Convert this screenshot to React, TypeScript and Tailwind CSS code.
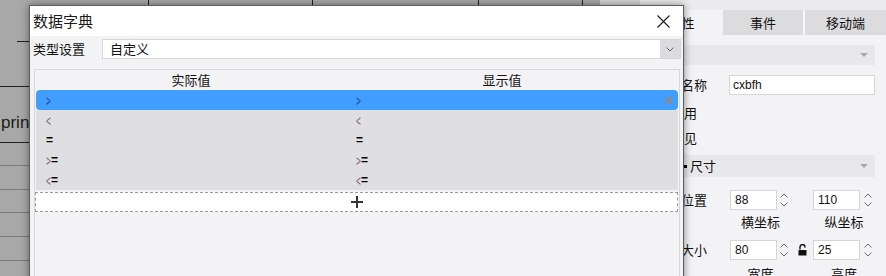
import React from 'react';

const rows: [string, string][] = [
  ['>', '>'],
  ['<', '<'],
  ['=', '='],
  ['>=', '>='],
  ['<=', '<='],
];

const Sym: React.FC<{ v: string; active?: boolean }> = ({ v, active }) => (
  <span className="inline-flex items-center font-['Liberation_Sans',sans-serif] leading-none">
    {v.split('').map((c, i) =>
      c === '=' ? (
        <span key={i} className="text-[12px] text-black font-bold">=</span>
      ) : (
        <span
          key={i}
          className={`inline-block w-[5px] text-[15px] scale-x-[0.55] origin-left ${active ? 'text-[#23408e]' : 'text-[#7b5a78]'}`}
        >
          {c}
        </span>
      )
    )}
  </span>
);

const Spinner = () => (
  <div className="flex flex-col items-center justify-between h-full py-[3px]">
    <svg width="8" height="5" viewBox="0 0 8 5">
      <path d="M0.5 4.5 L4 1 L7.5 4.5" fill="none" stroke="#6b6b6b" strokeWidth="1" />
    </svg>
    <svg width="8" height="5" viewBox="0 0 8 5">
      <path d="M0.5 0.5 L4 4 L7.5 0.5" fill="none" stroke="#6b6b6b" strokeWidth="1" />
    </svg>
  </div>
);

const NumBox: React.FC<{ value: string }> = ({ value }) => (
  <div className="w-[47px] h-full bg-white border border-[#d6d6d6] flex items-center pl-[4px] font-['Liberation_Sans',sans-serif] text-[12px] text-[#111]">
    {value}
  </div>
);

const Triangle = () => (
  <svg width="8" height="4" viewBox="0 0 8 4">
    <path d="M0 0 L8 0 L4 4 Z" fill="#a8a8a8" />
  </svg>
);

const PropertyPanel = () => (
  <div className="w-[246px] h-full bg-[#f3f3f5] flex flex-col overflow-hidden text-[13px] text-[#111]">
    <div className="h-[10px] shrink-0 bg-[#ebebed]" />
    <div className="flex h-[25px] shrink-0">
      <div className="w-[83px] flex items-center justify-center bg-[#f3f3f5]">属性</div>
      <div className="w-[80px] flex items-center justify-center bg-[#dcdcdf]">事件</div>
      <div className="w-[2px] bg-[#f7f7f7]" />
      <div className="w-[81px] flex items-center justify-center bg-[#dcdcdf]">移动端</div>
    </div>

    <div className="mt-[10px] mx-[11px] h-[20px] shrink-0 bg-[#e8e8ea] flex items-center justify-end pr-[7px]">
      <Triangle />
    </div>

    <div className="mt-[10px] h-[20px] shrink-0 flex items-center">
      <div className="ml-[11px] w-[58px] text-right pr-[2px]">控件名称</div>
      <div className="ml-[20px] w-[146px] h-full bg-white border border-[#d6d6d6] flex items-center pl-[3px] font-['Liberation_Sans',sans-serif] text-[12px]">
        cxbfh
      </div>
    </div>

    <div className="mt-[5px] h-[25px] shrink-0 flex items-center pl-[31px]">启用</div>
    <div className="h-[25px] shrink-0 flex items-center pl-[31px]">可见</div>

    <div className="mt-[5px] mx-[11px] h-[22px] shrink-0 bg-[#e8e8ea] flex items-center pr-[7px]">
      <span className="ml-[33px] w-[3px] h-[3px] bg-black" />
      <span className="ml-[3px]">尺寸</span>
      <span className="flex-1" />
      <Triangle />
    </div>

    <div className="mt-[13px] h-[20px] shrink-0 flex items-center">
      <div className="ml-[11px] w-[58px] text-right pr-[2px]">位置</div>
      <div className="ml-[21px] flex h-full">
        <NumBox value="88" />
        <div className="w-[14px] h-full"><Spinner /></div>
        <div className="w-[22px]" />
        <NumBox value="110" />
        <div className="w-[15px] h-full"><Spinner /></div>
      </div>
    </div>
    <div className="mt-[3px] h-[18px] shrink-0 flex items-center">
      <div className="ml-[90px] w-[61px] text-center">横坐标</div>
      <div className="ml-[22px] w-[62px] text-center">纵坐标</div>
    </div>

    <div className="mt-[9px] h-[20px] shrink-0 flex items-center">
      <div className="ml-[11px] w-[58px] text-right pr-[2px]">大小</div>
      <div className="ml-[21px] flex h-full">
        <NumBox value="80" />
        <div className="w-[14px] h-full"><Spinner /></div>
        <div className="w-[22px] flex items-center justify-center">
          <svg width="9" height="12" viewBox="0 0 9 12">
            <path d="M2 5.5 V3 A2.5 2.5 0 0 1 7 3 V3.5" fill="none" stroke="#111" strokeWidth="1.4" />
            <rect x="0.5" y="6" width="8" height="5.5" fill="#111" />
          </svg>
        </div>
        <NumBox value="25" />
        <div className="w-[15px] h-full"><Spinner /></div>
      </div>
    </div>
    <div className="mt-[5px] h-[18px] shrink-0 flex items-center">
      <div className="ml-[90px] w-[61px] text-center">宽度</div>
      <div className="ml-[22px] w-[62px] text-center">高度</div>
    </div>
  </div>
);

const Canvas = () => (
  <div className="w-[600px] h-full bg-[#a8a8a8] flex flex-col overflow-hidden">
    <div className="flex h-[5px] shrink-0">
      <div className="w-[149px] border-r border-[#1f1f1f]" />
      <div className="w-[164px] border-r border-[#1f1f1f]" />
      <div className="w-[166px] border-r border-[#1f1f1f]" />
      <div className="w-[104px] border-r border-[#1f1f1f]" />
    </div>
    <div className="h-[36px] shrink-0" />
    <div className="ml-[17px] h-[45px] shrink-0 border-t border-[#1f1f1f]" />
    <div className="h-[56px] shrink-0 border-t border-[#1f1f1f] pt-[25px] pl-[1px] font-['Liberation_Sans',sans-serif] text-[17px] leading-[22px] text-[#1a1a1a]">
      print
    </div>
    <div className="h-[23px] shrink-0 border-t border-[#1f1f1f]" />
    <div className="h-[24px] shrink-0 border-t border-[#7c7c7c]" />
    <div className="h-[23px] shrink-0 border-t border-[#7c7c7c]" />
    <div className="h-[24px] shrink-0 border-t border-[#7c7c7c]" />
    <div className="h-[24px] shrink-0 border-t border-[#7c7c7c]" />
    <div className="h-[24px] shrink-0 border-t border-[#7c7c7c]" />
  </div>
);

const DictDialog = () => (
  <div className="absolute left-[29px] top-[5px] w-[655px] h-[300px] border border-[#5e5e5e] bg-[#f3f3f5] shadow-[0_0_8px_rgba(0,0,0,0.45)] flex flex-col text-[13px] text-[#111]">
    <div className="h-[30px] shrink-0 bg-white flex items-center justify-between pl-[3px] pr-[13px]">
      <span className="text-[15px] text-[#1a1a1a]">数据字典</span>
      <svg width="13" height="13" viewBox="0 0 13 13">
        <path d="M0.5 0.5 L12.5 12.5 M12.5 0.5 L0.5 12.5" stroke="#1a1a1a" strokeWidth="1.1" />
      </svg>
    </div>

    <div className="mt-[3px] h-[20px] shrink-0 flex items-center pl-[3px] pr-[2px]">
      <span className="w-[69px]">类型设置</span>
      <div className="flex-1 h-full bg-white border border-[#d6d6d6] flex items-center">
        <span className="flex-1 pl-[7px]">自定义</span>
        <div className="w-[20px] h-full bg-[#dcdcde] flex items-center justify-center">
          <svg width="8" height="5" viewBox="0 0 8 5">
            <path d="M0.5 0.5 L4 4 L7.5 0.5" fill="none" stroke="#666" strokeWidth="1" />
          </svg>
        </div>
      </div>
    </div>

    <div className="mt-[10px] ml-[4px] mr-[3px] flex-1 border border-[#d8d8d8] flex flex-col">
      <div className="h-[20px] shrink-0 flex items-center px-[1px]">
        <div className="w-[310px] text-center">实际值</div>
        <div className="w-[312px] text-center">显示值</div>
      </div>
      <div className="px-[1px] shrink-0">
        {rows.map(([a, b], i) => (
          <div
            key={i}
            className={`h-[20px] flex items-center ${i === 0 ? 'bg-[#409eff] rounded-[4px]' : 'bg-[#dfdfe1]'}`}
          >
            <div className="w-[310px] pl-[10px] flex items-center">
              <Sym v={a} active={i === 0} />
            </div>
            <div className="w-[312px] pl-[10px] flex items-center">
              <Sym v={b} active={i === 0} />
            </div>
            <div className="flex-1 flex items-center justify-center">
              {i === 0 && (
                <svg width="9" height="9" viewBox="0 0 9 9">
                  <path d="M1 1 L8 8 M8 1 L1 8" stroke="#8a8a8a" strokeWidth="2" />
                </svg>
              )}
            </div>
          </div>
        ))}
      </div>
      <div className="mt-[2px] mr-[1px] h-[20px] shrink-0 bg-white border border-dashed border-[#9a9a9a] flex items-center justify-center">
        <svg width="12" height="12" viewBox="0 0 12 12">
          <path d="M6 0 V12 M0 6 H12" stroke="#333" strokeWidth="2" />
        </svg>
      </div>
    </div>
  </div>
);

export default function App() {
  return (
    <div className="relative w-[886px] h-[276px] overflow-hidden flex font-['Noto_Sans_CJK_SC',sans-serif]">
      <Canvas />
      <div className="w-[40px] h-full bg-[#d6d6d6]" />
      <PropertyPanel />
      <DictDialog />
    </div>
  );
}
